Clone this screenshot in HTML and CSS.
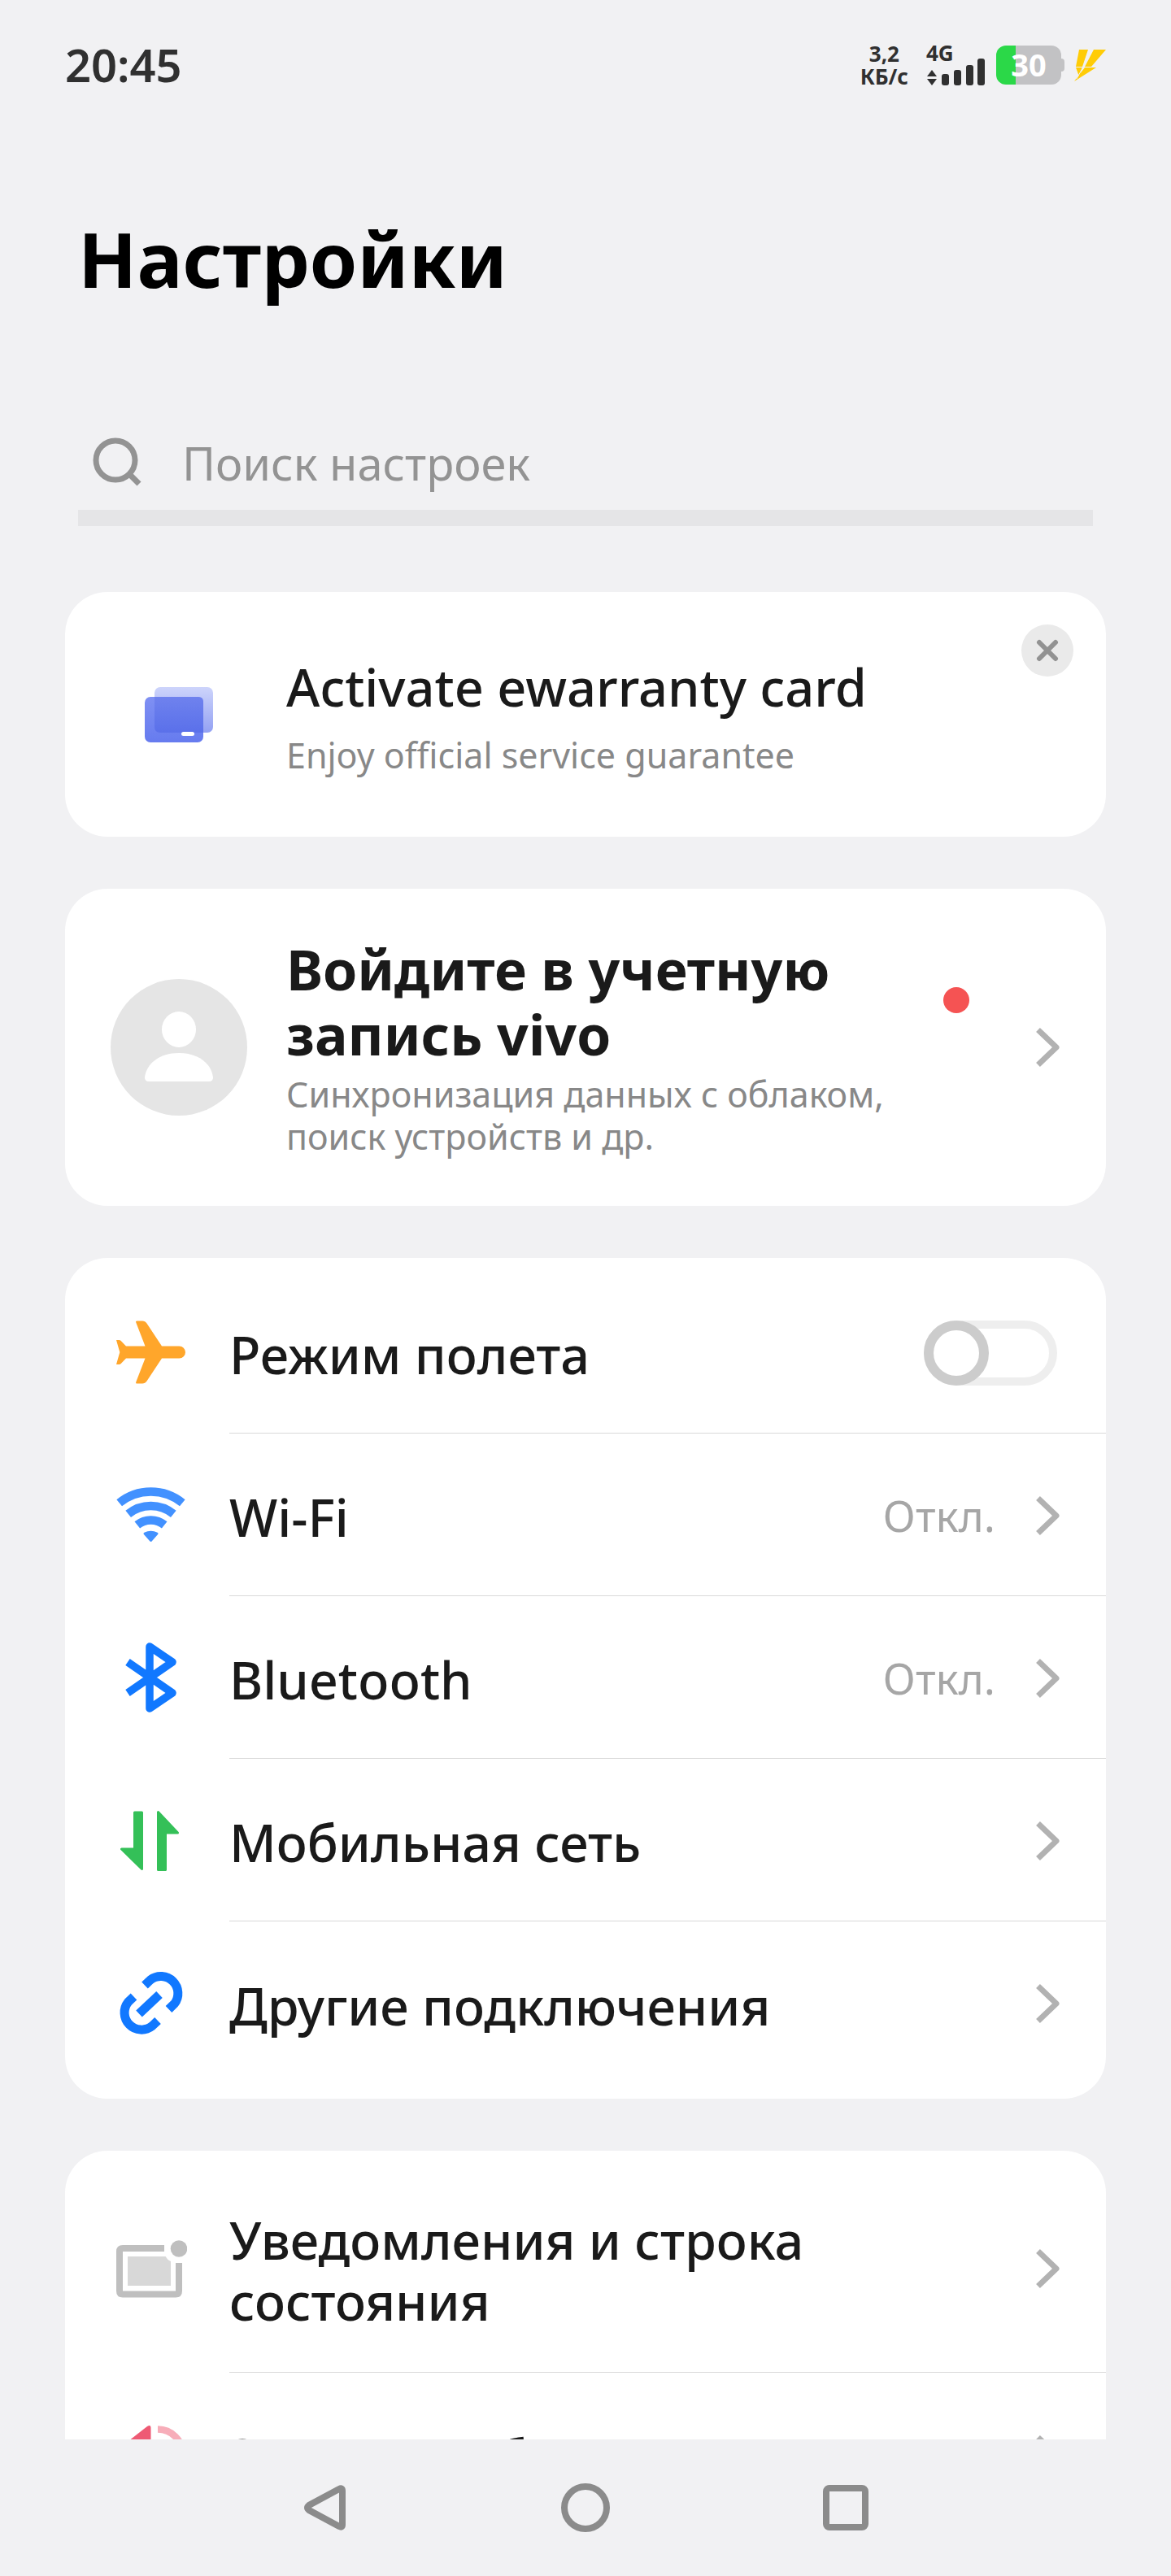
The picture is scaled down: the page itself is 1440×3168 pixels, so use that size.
FILE: index.html
```html
<!DOCTYPE html>
<html lang="ru">
<head>
  <meta charset="UTF-8">
  <meta name="viewport" content="width=device-width, initial-scale=1.0">

  <title>Настройки</title>
  <link rel="stylesheet" href="styles.css">
</head>
<body>

<!-- shared arrow for all rows -->
<svg class="defs" width="0" height="0" aria-hidden="true">
  <symbol id="chevron" viewBox="0 0 32 52">
    <path d="M4.5 4.5L27 26L4.5 47.5" fill="none" stroke="#b2b2b2" stroke-width="7" stroke-linejoin="round"/>
  </symbol>
</svg>

<div class="status-bar">
  <time class="clock">20:45</time>
  <div class="status-icons">
    <div class="net-speed">3,2<br>КБ/с</div>
    <div class="signal">
      <span class="net-type">4G</span>
      <svg width="72" height="34" viewBox="0 0 72 34" fill="#303030">
        <path d="M7 15l6 8H1zM7 34l6-8H1z"/>
        <rect x="19" y="20" width="9" height="14" rx="3"/>
        <rect x="34" y="15" width="9" height="19" rx="3"/>
        <rect x="49" y="9" width="9" height="25" rx="3"/>
        <rect x="63" y="1" width="9" height="33" rx="3"/>
      </svg>
    </div>
    <div class="battery">30</div>
    <svg class="bolt" width="40" height="40" viewBox="0 0 40 40" fill="#ffcc06">
      <path d="M7 1h11l-7 21H3zM25 1h15L22 22h-8z"/>
      <path d="M3 23h8l-4 11zM14 23h14L1 40z"/>
      <path d="M12 22l-8 15" stroke="#f1f1f3" stroke-width="1"/>
    </svg>
  </div>
</div>

<main class="content">
  <h1>Настройки</h1>

  <label class="search">
    <svg width="64" height="64" viewBox="0 0 64 64" fill="none" stroke="#939393" stroke-width="7">
      <circle cx="30" cy="31" r="24"/>
      <path d="M46 47l13 13"/>
    </svg>
    <input type="search" placeholder="Поиск настроек" aria-label="Поиск настроек">
  </label>

  <section class="card banner">
    <div class="lead">
      <svg width="84" height="72" viewBox="4 0 84 72">
        <defs>
          <linearGradient id="back" x1="0" y1="0" x2="0" y2="1">
            <stop offset="0" stop-color="#cdd4fb"/><stop offset="1" stop-color="#93a1f3"/>
          </linearGradient>
          <linearGradient id="front" x1="0" y1="0" x2="0" y2="1">
            <stop offset="0" stop-color="#7f90f3"/><stop offset="1" stop-color="#667bef"/>
          </linearGradient>
          <linearGradient id="overlap" x1="0" y1="0" x2="0" y2="1">
            <stop offset="0" stop-color="#6f82ee"/><stop offset="1" stop-color="#5a70ea"/>
          </linearGradient>
        </defs>
        <rect x="16" y="2" width="72" height="56" rx="7" fill="url(#back)"/>
        <rect x="4" y="14" width="72" height="56" rx="7" fill="url(#front)"/>
        <path d="M16 14H70q6 0 6 6V58H23q-7 0-7-7z" fill="url(#overlap)"/>
        <rect x="49" y="57" width="16" height="5" rx="2.5" fill="#fff"/>
      </svg>
    </div>
    <div class="card-text">
      <h2>Activate ewarranty card</h2>
      <p>Enjoy official service guarantee</p>
    </div>
    <button class="close" type="button" aria-label="Закрыть">
      <svg width="28" height="28" viewBox="0 0 28 28" stroke="#929292" stroke-width="6" stroke-linecap="round"><path d="M4 4l20 20M24 4L4 24"/></svg>
    </button>
  </section>

  <a class="card account" href="#">
    <div class="lead">
      <svg width="168" height="168" viewBox="0 0 168 168">
        <circle cx="84" cy="84" r="84" fill="#e5e5e5"/>
        <ellipse cx="84" cy="62" rx="21" ry="22" fill="#fff"/>
        <path d="M47 126q-5 0-5-5C44 104 60 91 84 91s40 13 42 30q0 5-5 5z" fill="#fff"/>
      </svg>
    </div>
    <div class="card-text">
      <h2>Войдите в учетную запись vivo</h2>
      <p>Синхронизация данных с облаком, поиск устройств и др.</p>
    </div>
    <span class="dot"></span>
    <svg class="chevron"><use href="#chevron"/></svg>
  </a>

  <section class="card list">
    <div class="row">
      <svg class="icon" viewBox="0 0 88 88" fill="#ffa62b">
        <path d="M26.500 5.500H33q3.500 0 5.500 3L57 36.500H78.500a7.500 7.500 0 0 1 0 15H57L38.500 79.500q-2 3-5.500 3H26.500q-2 0-1.200-2L36.500 51.500H13L6.500 58.200Q5.500 59 4.500 59H1L5.300 44L1 29H4.500q1 0 2 .8L13 36.500H36.500L25.300 7.500q-.8-2 1.200-2z"/>
      </svg>
      <div class="row-body">
        <label class="row-label" for="airplane">Режим полета</label>
        <input class="switch" type="checkbox" id="airplane">
      </div>
    </div>
    <a class="row" href="#">
      <svg class="icon" viewBox="0 0 88 88" fill="none" stroke="#4291ff" stroke-width="10.500">
        <path d="M4.700 29.300A61.500 61.500 0 0 1 82.300 29.300"/>
        <path d="M15.700 42.900A44 44 0 0 1 71.300 42.900"/>
        <path d="M26.800 56.400A26.500 26.500 0 0 1 60.200 56.400"/>
        <path d="M36 67q7.500-3.500 15 0L43.500 75.500z" fill="#4291ff" stroke-width="3" stroke-linejoin="round"/>
      </svg>
      <div class="row-body">
        <span class="row-label">Wi-Fi</span>
        <span class="row-value">Откл.</span>
        <svg class="chevron"><use href="#chevron"/></svg>
      </div>
    </a>
    <a class="row" href="#">
      <svg class="icon" viewBox="0 0 88 88" fill="none" stroke="#1178ff" stroke-width="9.500" stroke-linejoin="round">
        <path d="M15 25L70 63L42 82V6L70 25L15 63"/>
      </svg>
      <div class="row-body">
        <span class="row-label">Bluetooth</span>
        <span class="row-value">Откл.</span>
        <svg class="chevron"><use href="#chevron"/></svg>
      </div>
    </a>
    <a class="row" href="#">
      <svg class="icon" viewBox="0 0 88 88" fill="#34c058" stroke="#34c058" stroke-width="3" stroke-linejoin="round">
        <path d="M23.500 10H32.500V79.500L7.500 55H23.500z"/>
        <path d="M52.500 80.500H61.500V35H76.500L52.500 9.500z"/>
      </svg>
      <div class="row-body">
        <span class="row-label">Мобильная сеть</span>
        <svg class="chevron"><use href="#chevron"/></svg>
      </div>
    </a>
    <a class="row" href="#">
      <svg class="icon" viewBox="0 0 88 88" fill="none" stroke="#1178ff" stroke-width="11">
        <path d="M36 22.500L43 15.800A21 21 0 0 1 72.500 45.200L65.500 52"/>
        <path d="M52 66L45 72.700A21 21 0 0 1 15.700 43L22.500 36.500"/>
        <path d="M29 57.500L54 34"/>
      </svg>
      <div class="row-body">
        <span class="row-label">Другие подключения</span>
        <svg class="chevron"><use href="#chevron"/></svg>
      </div>
    </a>
  </section>

  <section class="card list">
    <a class="row" href="#">
      <svg class="icon" viewBox="0 0 88 88">
        <path d="M60 19H9q-4 0-4 4V71.500q0 4 4 4H74q4 0 4-4V37" fill="none" stroke="#bfbfbf" stroke-width="8"/>
        <path d="M15 29H61.500q2 4 6.500 6V65H15z" fill="#d8d8d8"/>
        <circle cx="78" cy="19.500" r="10.300" fill="#bfbfbf"/>
      </svg>
      <div class="row-body">
        <span class="row-label">Уведомления и строка состояния</span>
        <svg class="chevron"><use href="#chevron"/></svg>
      </div>
    </a>
    <a class="row" href="#">
      <svg class="icon" viewBox="0 0 88 88">
        <path d="M39 10q4.500-3 4.500 2V76q0 5-4.500 2L18 60H6q-4 0-4-4V32q0-4 4-4H16z" fill="#ee5a74"/>
        <path d="M52 13.500A30.500 30.500 0 0 1 52 74.500" fill="none" stroke="#f7adb9" stroke-width="8.500"/>
      </svg>
      <div class="row-body">
        <span class="row-label">Звуки и вибрация</span>
        <svg class="chevron"><use href="#chevron"/></svg>
      </div>
    </a>
  </section>
</main>

<nav class="nav-bar">
  <button type="button" aria-label="Назад">
    <svg viewBox="0 0 64 64"><path d="M49 9Q53 7 53 11V53Q53 57 49 55L12 35Q8 32 12 29z"/></svg>
  </button>
  <button type="button" aria-label="Домой">
    <svg viewBox="0 0 64 64"><circle cx="32" cy="32" r="26"/></svg>
  </button>
  <button type="button" aria-label="Недавние">
    <svg viewBox="0 0 64 64"><rect x="8" y="8" width="48" height="48" rx="4"/></svg>
  </button>
</nav>

</body>
</html>
```

FILE: styles.css
```css
* { box-sizing: border-box; }

body {
  display: flex;
  flex-direction: column;
  height: 100vh;
  margin: 0;
  background: #f1f1f3;
  color: #1a1a1a;
  font-family: "Noto Sans", sans-serif;
}

h1, h2, p { margin: 0; }
a { color: inherit; text-decoration: none; }
svg { display: block; flex: none; }
button { padding: 0; border: none; background: none; cursor: pointer; }
.defs { position: absolute; }

/* status bar */
.status-bar {
  display: flex;
  flex: none;
  align-items: center;
  justify-content: space-between;
  height: 160px;
  padding: 0 80px;
  color: #303030;
}

.clock { font-size: 56px; font-weight: 600; line-height: 76px; padding-bottom: 2px; }
.status-icons { display: flex; align-items: center; }

.net-speed {
  margin-right: 22px;
  font-size: 26px;
  font-weight: bold;
  line-height: 28px;
  text-align: center;
}

.signal { margin-right: 14px; }
.net-type {
  display: block;
  height: 16px;
  font-size: 26px;
  font-weight: bold;
  line-height: 20px;
}

.battery {
  width: 80px;
  height: 48px;
  margin-right: 15px;
  border-radius: 12px;
  background: linear-gradient(to right, #2bd848 30%, #c2c2c4 30%);
  color: #fff;
  font-size: 38px;
  font-weight: bold;
  line-height: 46px;
  text-align: center;
  position: relative;
}
.battery::after {
  content: "";
  position: absolute;
  top: 16px;
  left: 80px;
  width: 4px;
  height: 16px;
  border-radius: 0 4px 4px 0;
  background: #c2c2c4;
}

/* page */
.content {
  flex: 1;
  min-height: 0;
  overflow: hidden;
  padding: 0 80px;
}

h1 {
  margin: 98px 16px 0;
  color: #000;
  font-size: 94px;
  line-height: 120px;
}

.search {
  display: flex;
  align-items: center;
  gap: 48px;
  height: 140px;
  margin: 129px 16px 81px;
  padding-left: 16px;
  border-bottom: 20px solid #e5e5e7;
}
.search input {
  flex: 1;
  min-width: 0;
  padding: 4px 0 0;
  border: none;
  outline: none;
  background: none;
  font-family: inherit;
  font-size: 56px;
}
.search input::placeholder { color: #939393; }

.card {
  position: relative;
  margin-bottom: 64px;
  border-radius: 52px;
  background: #fff;
}

.banner, .account {
  display: flex;
  align-items: center;
  padding: 0 56px;
}
.banner { min-height: 301px; }
.account { min-height: 390px; }

.lead {
  display: flex;
  flex: none;
  justify-content: center;
  width: 168px;
  margin-right: 48px;
}
.card-text { flex: 1; }
.card-text h2 { font-size: 63px; font-weight: 500; line-height: 84px; }
.card-text p {
  margin-top: 16px;
  color: #888;
  font-size: 43px;
  line-height: 52px;
}
.account h2 { font-size: 68px; font-weight: bold; line-height: 80px; }
.account p { margin-top: 8px; }

.close {
  position: absolute;
  top: 40px;
  right: 40px;
  display: flex;
  align-items: center;
  justify-content: center;
  width: 64px;
  height: 64px;
  border-radius: 50%;
  background: #eaeaea;
}

.dot {
  width: 32px;
  height: 32px;
  margin: 0 80px 116px 24px;
  border-radius: 50%;
  background: #f55353;
}

.chevron { width: 32px; height: 52px; }

/* setting rows */
.list { padding: 16px 0 18px; }

.row {
  display: flex;
  align-items: center;
  padding-left: 62px;
}
.icon { width: 88px; height: 88px; margin-right: 52px; }

.row-body {
  display: flex;
  flex: 1;
  align-items: center;
  min-height: 200px;
  padding: 52px 56px 50px 0;
  border-bottom: 1px solid #d9d9d9;
}
.row:last-child .row-body { border-bottom: none; }

.row-label {
  flex: 1;
  padding-top: 4px;
  font-size: 63px;
  font-weight: 500;
  line-height: 75px;
}
.row-value {
  margin-right: 48px;
  color: #a6a6a6;
  font-size: 53px;
}

.switch {
  appearance: none;
  width: 164px;
  height: 80px;
  margin: 0 4px 0 0;
  border: 10px solid #eee;
  border-radius: 40px;
}
.switch::before {
  content: "";
  display: block;
  box-sizing: border-box;
  width: 80px;
  height: 80px;
  margin: -10px;
  border: 12px solid #ccc;
  border-radius: 50%;
  background: #fff;
}
.switch:checked::before { margin-left: 74px; border-color: #1178ff; }

/* system buttons */
.nav-bar {
  display: flex;
  flex: none;
  align-items: center;
  justify-content: center;
  gap: 256px;
  height: 168px;
}
.nav-bar svg {
  width: 64px;
  height: 64px;
  fill: none;
  stroke: #8b8b8b;
  stroke-width: 8px;
}
```
